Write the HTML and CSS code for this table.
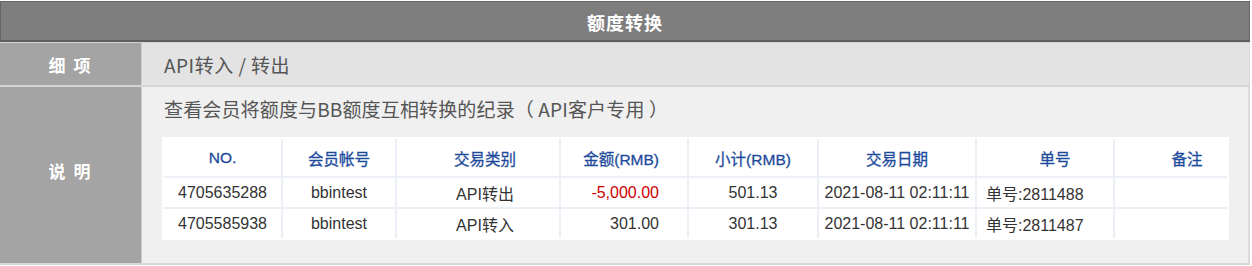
FILE: index.html
```html
<!DOCTYPE html>
<html lang="zh-CN">
<head>
<meta charset="utf-8">
<title>额度转换</title>
<link rel="stylesheet" href="styles.css">
</head>
<body>
<div class="panel">
  <div class="title">额度转换</div>
  <div class="row row-item">
    <div class="label">细 项</div>
    <div class="value">API转入 / 转出</div>
  </div>
  <div class="row row-desc">
    <div class="label label-desc">说 明</div>
    <div class="value">
      <div class="desc">查看会员将额度与BB额度互相转换的纪录（ API客户专用 ）</div>
      <div class="table-wrap">
        <table class="records">
          <colgroup>
            <col class="c1"><col class="c2"><col class="c3"><col class="c4">
            <col class="c5"><col class="c6"><col class="c7"><col class="c8">
          </colgroup>
          <thead>
            <tr>
              <th>NO.</th>
              <th>会员帐号</th>
              <th class="type">交易类别</th>
              <th class="amt">金额(RMB)</th>
              <th>小计(RMB)</th>
              <th>交易日期</th>
              <th class="no-h">单号</th>
              <th class="memo-h">备注</th>
            </tr>
          </thead>
          <tbody>
            <tr>
              <td>4705635288</td>
              <td>bbintest</td>
              <td class="type">API转出</td>
              <td class="amt neg">-5,000.00</td>
              <td>501.13</td>
              <td>2021-08-11 02:11:11</td>
              <td class="no">单号:2811488</td>
              <td></td>
            </tr>
            <tr>
              <td>4705585938</td>
              <td>bbintest</td>
              <td class="type">API转入</td>
              <td class="amt">301.00</td>
              <td>301.13</td>
              <td>2021-08-11 02:11:11</td>
              <td class="no">单号:2811487</td>
              <td></td>
            </tr>
          </tbody>
        </table>
      </div>
    </div>
  </div>
</div>
</body>
</html>
```

FILE: styles.css
```css
html, body {
  margin: 0;
  padding: 0;
  background: #ffffff;
}

body {
  font-family: "Noto Sans CJK SC", "Noto Sans", sans-serif;
}

.panel {
  width: 1250px;
  margin-top: 1px;
}

.title {
  height: 38px;
  line-height: 40px;
  background: #7e7e7e;
  border: 1px solid #666666;
  border-bottom: 2px solid #5e5e5e;
  color: #ffffff;
  text-align: center;
  font-size: 18px;
  font-weight: bold;
  letter-spacing: 1px;
}

.row {
  display: grid;
  grid-template-columns: 142px 1fr;
  border-top: 1px solid #d2d2d2;
}

.label {
  background: #a4a4a4;
  color: #ffffff;
  font-size: 17px;
  font-weight: bold;
  letter-spacing: 2px;
  display: flex;
  align-items: center;
  justify-content: center;
  border-right: 1px solid #cfcfcf;
}

.label-desc {
  padding-bottom: 10px;
}

.row-item {
  height: 42px;
}

.row-item .value {
  background: #e3e3e3;
  color: #555555;
  font-size: 19px;
  letter-spacing: 0.5px;
  display: flex;
  align-items: center;
  padding-left: 22px;
  border-right: 1px solid #d6d6d6;
}

.row-desc {
  height: 176px;
  border-top: 2px solid #d4d4d4;
  border-bottom: 2px solid #d9d9d9;
}

.row-desc .value {
  background: #f0f0f0;
  padding: 9px 0 0 20px;
  border-right: 2px solid #dcdcdc;
}

.desc {
  color: #555555;
  font-size: 19px;
  line-height: 26px;
  letter-spacing: 0.15px;
  padding-left: 2px;
}

.table-wrap {
  margin-top: 15px;
  width: 1063px;
  background: #ffffff;
  padding: 2px;
}

.records {
  width: 1063px;
  border-collapse: collapse;
  border-style: hidden;
  table-layout: fixed;
  font-family: "Liberation Sans", "Noto Sans CJK SC", sans-serif;
  font-size: 16px;
}

.c1 { width: 118px; }
.c2 { width: 114px; }
.c3 { width: 164px; }
.c4 { width: 128px; }
.c5 { width: 130px; }
.c6 { width: 158px; }
.c7 { width: 138px; }
.c8 { width: 113px; }

.records th,
.records td {
  border: 2px solid #eceff5;
  text-align: center;
  padding: 0;
  white-space: nowrap;
}

.records th {
  height: 37px;
  color: #1d4b9c;
  font-weight: normal;
  font-size: 15.5px;
  -webkit-text-stroke: 0.3px #1d4b9c;
}

.records td {
  height: 29px;
  color: #333333;
}

.records .type {
  padding-left: 14px;
}

.records .amt {
  text-align: right;
  padding-right: 28px;
}

.records .neg {
  color: #cc0000;
}

.records .no-h {
  padding-left: 20px;
}

.records .memo-h {
  padding-left: 32px;
}

.records .no {
  text-align: left;
  padding-left: 9px;
}
```
